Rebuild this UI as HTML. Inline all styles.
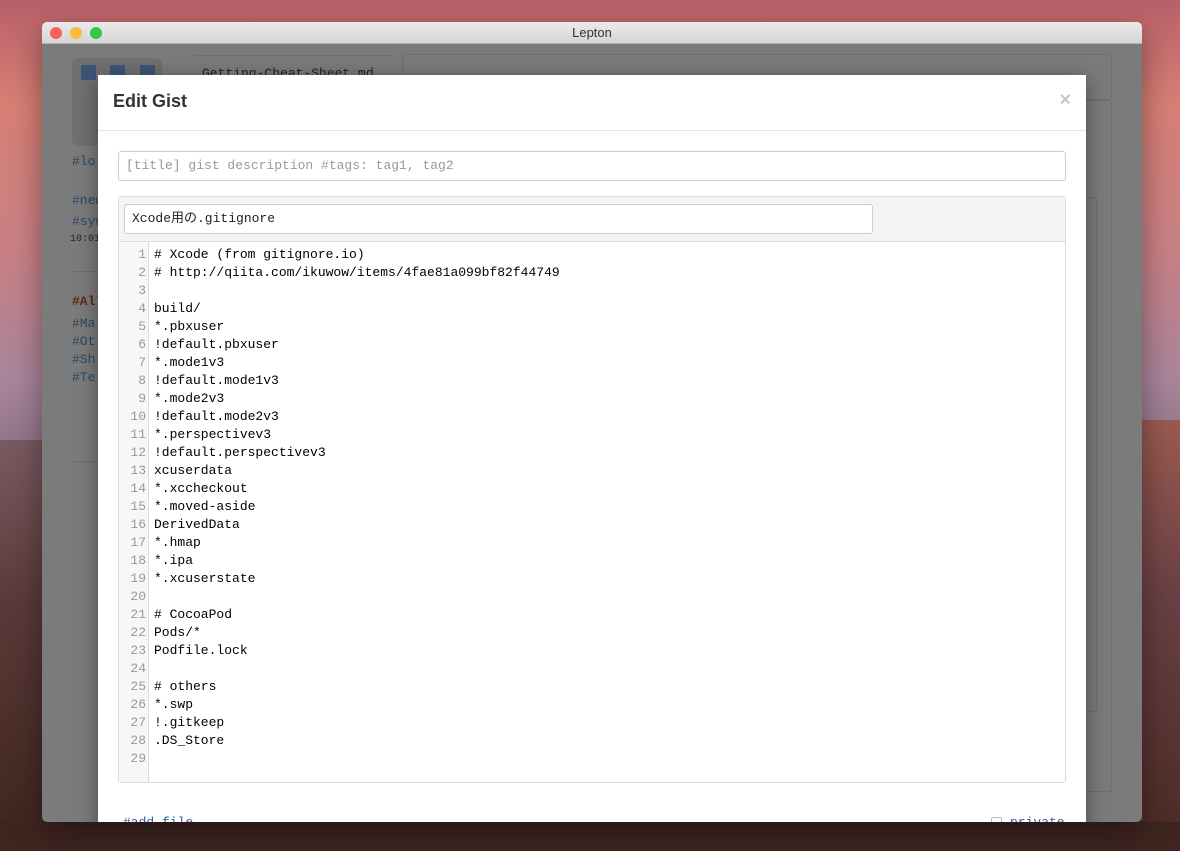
<!DOCTYPE html>
<html><head><meta charset="utf-8"><style>
*{box-sizing:border-box;margin:0;padding:0}
body{width:1180px;height:851px;overflow:hidden;position:relative;font-family:"Liberation Sans",sans-serif;
background:linear-gradient(180deg,#b8606a 0%,#d77f74 12%,#c78085 30%,#a8849a 45%,#8a6f80 55%,#6a4a4c 68%,#4a2c26 85%,#3a201a 100%);}
.bgl{position:absolute;left:0;top:440px;width:42px;height:411px;background:linear-gradient(180deg,#7a5a62,#5a3a38 40%,#3e241e)}
.bgr{position:absolute;right:0;top:420px;width:38px;height:431px;background:linear-gradient(180deg,#9a5a50,#6a4044 40%,#4a2a24)}
.bgb{position:absolute;left:0;top:822px;width:1180px;height:29px;background:#3f2520}
.win{position:absolute;left:42px;top:22px;width:1100px;height:800px;border-radius:5px;overflow:hidden;background:#7b7b7b;box-shadow:0 10px 30px rgba(0,0,0,.4)}
.tb{height:22px;background:linear-gradient(#ebebeb,#d6d6d6);border-bottom:1px solid #b0b0b0;text-align:center;font-size:13px;line-height:22px;color:#333}
.dot{position:absolute;top:5px;width:12px;height:12px;border-radius:50%}
.mono{font-family:"Liberation Mono","DejaVu Sans Mono",monospace}
.bgapp{position:absolute;color:#284866;font-size:13px}
.modal{position:absolute;left:56px;top:53px;width:988px;height:760px;background:#fff;box-shadow:0 4px 20px rgba(0,0,0,.4)}
.hd{height:56px;border-bottom:1px solid #e5e5e5;position:relative}
.hd h1{position:absolute;left:15px;top:16px;font-size:18px;font-weight:bold;color:#333}
.x{position:absolute;right:15px;top:14px;font-size:20px;font-weight:bold;color:#c8c8c8}
.inp{position:absolute;border:1px solid #ccc;border-radius:3px;background:#fff;font-size:13px;padding-left:7px}
.panel{position:absolute;left:20px;top:121px;width:948px;height:587px;border:1px solid #ddd;border-radius:3px}
.ph{height:45px;background:#f4f4f4;border-bottom:1px solid #ddd;position:relative}
.gut{position:absolute;left:0;top:45px;width:30px;bottom:0;background:#f7f7f7;border-right:1px solid #ddd}
.code{position:absolute;top:49px;left:0;font-size:13px;line-height:18px;color:#000;white-space:pre}
.ln{display:inline-block;width:27px;text-align:right;color:#999;margin-right:8px}
</style></head><body>
<div class="bgl"></div><div class="bgr"></div><div class="bgb"></div>
<div class="win">
<div class="tb">Lepton</div>
<div class="dot" style="left:8px;background:#fc605c"></div>
<div class="dot" style="left:28px;background:#fdbc40"></div>
<div class="dot" style="left:48px;background:#34c84a"></div>
<div style="position:absolute;left:30px;top:36px;width:90px;height:88px;background:#707070;border-radius:6px"></div>
<div style="position:absolute;left:39px;top:43px;width:15px;height:15px;background:#3c5678"></div>
<div style="position:absolute;left:68px;top:43px;width:15px;height:15px;background:#3c5678"></div>
<div style="position:absolute;left:98px;top:43px;width:15px;height:15px;background:#3c5678"></div>
<div style="position:absolute;left:152px;top:33px;width:200px;border-top:1px solid #6e6e6e"></div>
<div class="mono bgapp" style="left:160px;top:44px;color:#222">Getting-Cheat-Sheet.md</div>
<div style="position:absolute;left:360px;top:32px;width:710px;height:46px;border:1px solid #6e6e6e;border-radius:3px"></div>
<div style="position:absolute;left:1000px;top:175px;width:55px;height:515px;border:1px solid #6e6e6e;border-radius:3px"></div>
<div style="position:absolute;left:1030px;top:78px;width:40px;height:692px;border:1px solid #6e6e6e;border-radius:3px"></div>
<div class="mono bgapp" style="left:30px;top:132px">#lo</div>
<div class="mono bgapp" style="left:30px;top:171px">#new</div>
<div class="mono bgapp" style="left:30px;top:192px">#syn</div>
<div class="mono bgapp" style="left:28px;top:212px;font-size:10px;color:#222">10:01</div>
<div style="position:absolute;left:28px;top:249px;width:40px;border-top:1px solid #6e6e6e"></div>
<div class="mono bgapp" style="left:30px;top:272px;color:#5a2a10;font-weight:bold">#All</div>
<div class="mono bgapp" style="left:30px;top:294px">#Ma</div>
<div class="mono bgapp" style="left:30px;top:312px">#Ot</div>
<div class="mono bgapp" style="left:30px;top:330px">#Sh</div>
<div class="mono bgapp" style="left:30px;top:348px">#Te</div>
<div style="position:absolute;left:28px;top:439px;width:40px;border-top:1px solid #6e6e6e"></div>
<div class="modal">
<div class="hd"><h1>Edit Gist</h1><div class="x">×</div></div>
<div class="inp mono" style="left:20px;top:76px;width:948px;height:30px;line-height:28px;color:#999">[title] gist description #tags: tag1, tag2</div>
<div class="panel">
<div class="ph"><div class="inp" style="left:5px;top:7px;width:749px;height:30px;line-height:28px;font-family:'Liberation Mono','Noto Sans CJK JP',monospace;color:#222">Xcode用の.gitignore</div></div>
<div class="gut"></div>
<div class="code mono"><span class="ln">1</span># Xcode (from gitignore.io)
<span class="ln">2</span># http://qiita.com/ikuwow/items/4fae81a099bf82f44749
<span class="ln">3</span>
<span class="ln">4</span>build/
<span class="ln">5</span>*.pbxuser
<span class="ln">6</span>!default.pbxuser
<span class="ln">7</span>*.mode1v3
<span class="ln">8</span>!default.mode1v3
<span class="ln">9</span>*.mode2v3
<span class="ln">10</span>!default.mode2v3
<span class="ln">11</span>*.perspectivev3
<span class="ln">12</span>!default.perspectivev3
<span class="ln">13</span>xcuserdata
<span class="ln">14</span>*.xccheckout
<span class="ln">15</span>*.moved-aside
<span class="ln">16</span>DerivedData
<span class="ln">17</span>*.hmap
<span class="ln">18</span>*.ipa
<span class="ln">19</span>*.xcuserstate
<span class="ln">20</span>
<span class="ln">21</span># CocoaPod
<span class="ln">22</span>Pods/*
<span class="ln">23</span>Podfile.lock
<span class="ln">24</span>
<span class="ln">25</span># others
<span class="ln">26</span>*.swp
<span class="ln">27</span>!.gitkeep
<span class="ln">28</span>.DS_Store
<span class="ln">29</span></div>
</div>
<div class="mono" style="position:absolute;left:25px;top:740px;font-size:13px;color:#2a6496">#add file</div>
<div style="position:absolute;left:893px;top:742px;width:11px;height:11px;border:1px solid #bbb;border-radius:2px"></div>
<div class="mono" style="position:absolute;left:912px;top:740px;font-size:13px;color:#2a6496">private</div>
</div>
</div>
</body></html>
